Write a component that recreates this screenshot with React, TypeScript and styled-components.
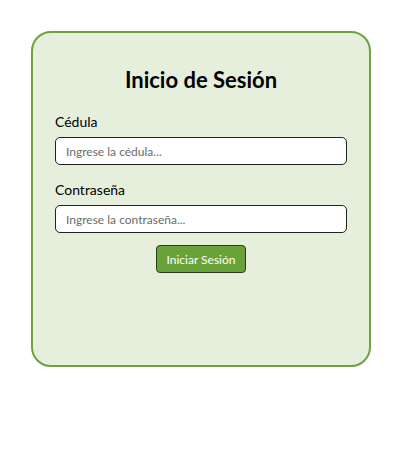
import React from "react";
import styled, { createGlobalStyle } from "styled-components";

const Global = createGlobalStyle`
  html, body { margin: 0; padding: 0; background: #ffffff; }
  body { font-family: Lato, "Noto Sans", sans-serif; color: #000; }
  * { box-sizing: border-box; }
`;

const Page = styled.div`
  padding: 31px 0 0 31px;
`;

const Card = styled.form`
  width: 340px;
  height: 336px;
  background: #e5efdc;
  border: 2px solid #6fa142;
  border-radius: 20px;
  padding: 22px 22px;
  display: flex;
  flex-direction: column;
`;

const Title = styled.h1`
  margin: 10px 0 17px;
  text-align: center;
  font-size: 22px;
  font-weight: 700;
  line-height: 30px;
`;

const Field = styled.div`
  display: flex;
  flex-direction: column;
  gap: 5px;
  & + & { margin-top: 15px; }
`;

const Label = styled.label`
  font-size: 14px;
  line-height: 20px;
`;

const Input = styled.input`
  width: 100%;
  height: 28px;
  border: 1px solid #222;
  border-radius: 5px;
  background: #fff;
  padding: 0 10px;
  font-family: inherit;
  font-size: 12px;
  color: #000;
  outline: none;
  &::placeholder { color: #6b6b6b; }
`;

const Button = styled.button`
  align-self: center;
  margin-top: 12px;
  width: 90px;
  height: 28px;
  background: #6aa23a;
  color: #fff;
  border: 1px solid #2b3a1e;
  border-radius: 4px;
  font-family: inherit;
  font-size: 12px;
  padding: 0;
  cursor: pointer;
`;

export default function App() {
  return (
    <>
      <Global />
      <Page>
        <Card onSubmit={(e) => e.preventDefault()}>
          <Title>Inicio de Sesión</Title>
          <Field>
            <Label htmlFor="cedula">Cédula</Label>
            <Input id="cedula" placeholder="Ingrese la cédula..." />
          </Field>
          <Field>
            <Label htmlFor="pass">Contraseña</Label>
            <Input id="pass" type="password" placeholder="Ingrese la contraseña..." />
          </Field>
          <Button type="submit">Iniciar Sesión</Button>
        </Card>
      </Page>
    </>
  );
}
